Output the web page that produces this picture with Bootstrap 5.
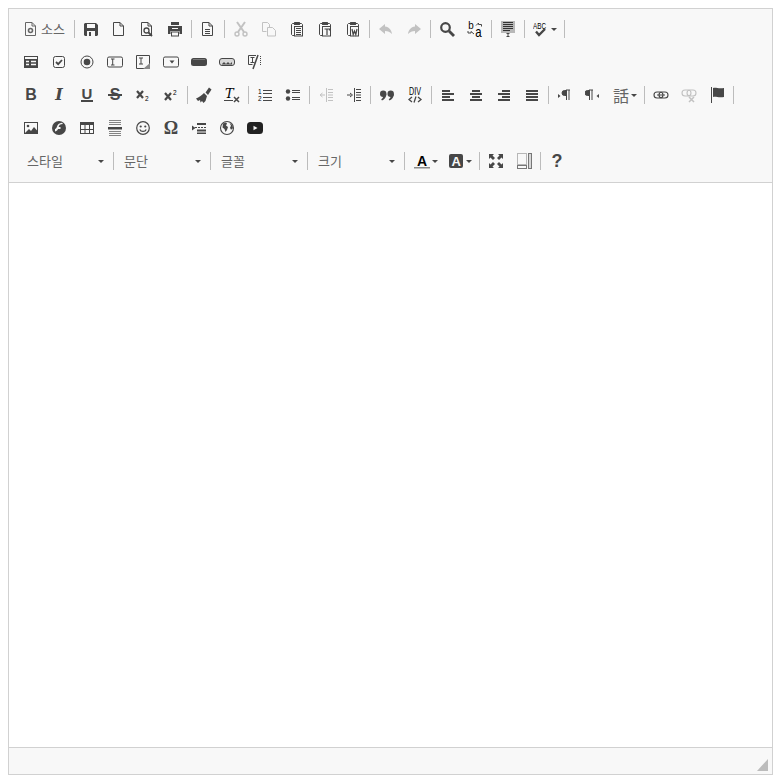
<!DOCTYPE html>
<html lang="ko">
<head>
    <meta charset="UTF-8">
    <meta name="viewport" content="width=device-width, initial-scale=1">
    <title>editor</title>
    <link rel="stylesheet" href="https://cdn.jsdelivr.net/npm/bootstrap@5.3.3/dist/css/bootstrap.min.css">
    <style>
        body { background: #fff; }
        .ed-box { height: 767px; width: 765px; border: 1px solid #d1d1d1; }
        .ed-top { background: #f8f8f8; border-bottom: 1px solid #d1d1d1; padding: 4px 0 4px 8px; }
        .ed-row { height: 32px; margin-bottom: 1px; }
        .ed-btn { width: 28px; height: 32px; padding: 8px 6px; flex: none; color: #474747; text-decoration: none; }
        .ed-btn.has-arrow { width: 35px; }
        .ed-btn.has-arrow.short { width: 34px; }
        .ed-btn.has-label { width: 55px; font: 13px/16px "Noto Sans CJK KR", sans-serif; color: #666; }
        .ed-btn.has-label span { margin-left: 2px; }
        .ed-ic { width: 16px; height: 16px; flex: none; display: block; }
        .ed-ic text { fill: currentColor; }
        .is-off .ed-ic { opacity: .3; }
        .ed-glyph { display: block; width: 16px; height: 16px; flex: none; line-height: 16px; text-align: center; }
        .g-b { font: bold 16px/16px "Liberation Sans", sans-serif; }
        .g-i { font: italic bold 16px/16px "DejaVu Serif", serif; }
        .g-u { font: bold 15px/14px "Liberation Sans", sans-serif; border-bottom: 2px solid #474747; height: 15px; width: 12px; margin: 0 2px; }
        .g-s { font: bold 16px/16px "Liberation Sans", sans-serif; background: linear-gradient(#474747, #474747) center / 14px 2px no-repeat; }
        .g-omega { font: bold 18px/16px "Liberation Serif", serif; }
        .g-help { font: bold 18px/16px "Liberation Sans", sans-serif; }
        .g-lang { font: 16px/16px "Noto Sans CJK TC", sans-serif; color: #666; }
        .ed-caret { width: 0; height: 0; margin: 0 0 0 2px; flex: none; border-left: 3px solid transparent; border-right: 3px solid transparent; border-top: 3px solid #474747; }
        .ed-sep { width: 1px; height: 18px; margin: 0 2px; flex: none; background: #bcbcbc; }
        .ed-sep.tight { margin-right: 0; }
        .ed-sep.wide { margin-right: 3px; }
        .ed-combo { width: 94px; height: 32px; padding: 0 7px 0 10px; flex: none; font: 13px/32px "Noto Sans CJK KR", sans-serif; color: #666; text-decoration: none; }
        .ed-combo .ed-caret { margin: 0 0 0 auto; }
        .ed-bottom { height: 27px; background: #f8f8f8; border-top: 1px solid #d1d1d1; }
        .ed-grip { width: 11px; height: 12px; margin: 0 4px 3px 0; }
        .t-s { font: 8px "Liberation Sans", sans-serif; }
        .t-m { font: 11px "Liberation Mono", monospace; }
        .t-xs { font: 6.5px "Liberation Sans", sans-serif; }
    </style>
</head>
<body class="m-2">

<svg width="0" height="0" class="position-absolute">
    <defs>
        <g id="doc"><path d="M2.5 1.5h6.5l3.5 3.5v9.5h-10z M9 1.5v3.5h3.5" fill="none" stroke="currentColor"/></g>
        <symbol id="i-source" viewBox="0 0 16 16"><use href="#doc"/><circle cx="7.5" cy="9.5" r="2" fill="none" stroke="currentColor" stroke-width="1.6"/></symbol>
        <symbol id="i-save" viewBox="0 0 16 16"><path d="M1 3l1-1h11l2 2v10l-1 1H2l-1-1z" fill="currentColor"/><rect x="4" y="3" width="8" height="4" fill="#f8f8f8"/><rect x="4" y="10" width="8" height="5" fill="#f8f8f8"/><rect x="6" y="11" width="2" height="4" fill="currentColor"/></symbol>
        <symbol id="i-new" viewBox="0 0 16 16"><use href="#doc"/></symbol>
        <symbol id="i-preview" viewBox="0 0 16 16"><use href="#doc"/><circle cx="7.5" cy="9.5" r="2.5" fill="#f8f8f8" stroke="currentColor" stroke-width="1.3"/><path d="M9.5 11.5l3.5 3.5" stroke="currentColor" stroke-width="1.8"/></symbol>
        <symbol id="i-print" viewBox="0 0 16 16"><rect x="4" y="1" width="8" height="3" fill="currentColor"/><path d="M1 5h14v8h-2.500v-3h-9v3H1z" fill="currentColor"/><rect x="4.500" y="11" width="7" height="4" fill="none" stroke="currentColor"/><rect x="5" y="7" width="6" height="1" fill="#f8f8f8"/></symbol>
        <symbol id="i-templates" viewBox="0 0 16 16"><use href="#doc"/><path d="M5 8.500h5M5 10.500h5M5 12.500h5" stroke="currentColor"/></symbol>
        <symbol id="i-cut" viewBox="0 0 16 16"><path d="M4 1l7 10M12 1L5 11" stroke="currentColor" stroke-width="2"/><circle cx="4" cy="13" r="2" fill="none" stroke="currentColor" stroke-width="1.400"/><circle cx="12" cy="13" r="2" fill="none" stroke="currentColor" stroke-width="1.400"/></symbol>
        <symbol id="i-copy" viewBox="0 0 16 16"><path d="M1.500 1.500h5l2 2v3M1.500 1.500v9h4" fill="none" stroke="currentColor"/><path d="M6.500 6.500h5l3 3v5.500h-8z" fill="none" stroke="currentColor"/></symbol>
        <g id="clip"><path d="M5 2.500H3.500l-1 1v10l1 1H5M11 2.500h1.500l1 1V5" fill="none" stroke="currentColor"/><rect x="5" y="1" width="6" height="3" rx=".5" fill="currentColor"/><rect x="5.500" y="5.500" width="8" height="9.500" fill="#f8f8f8" stroke="currentColor"/></g>
        <symbol id="i-paste" viewBox="0 0 16 16"><use href="#clip"/><path d="M7 7.500h5M7 9.500h5M7 11.500h5M7 13.500h5" stroke="currentColor"/></symbol>
        <symbol id="i-pastetext" viewBox="0 0 16 16"><use href="#clip"/><path d="M7.500 8h5v1.500M10 8v6" fill="none" stroke="currentColor" stroke-width="1.200"/></symbol>
        <symbol id="i-pasteword" viewBox="0 0 16 16"><use href="#clip"/><path d="M7 8l1.200 5.500L9.500 10l1.300 3.500L12 8" fill="none" stroke="currentColor" stroke-width="1.200"/></symbol>
        <symbol id="i-undo" viewBox="0 0 16 16"><path d="M7 3L1 8l6 5v-3c3 0 5 1 7 3-.500-4-3-7-7-7.500z" fill="currentColor"/></symbol>
        <symbol id="i-redo" viewBox="0 0 16 16"><path d="M9 3l6 5-6 5v-3c-3 0-5 1-7 3 .5-4 3-7 7-7.500z" fill="currentColor"/></symbol>
        <symbol id="i-find" viewBox="0 0 16 16"><circle cx="6.500" cy="6.500" r="4.300" fill="none" stroke="currentColor" stroke-width="2.200"/><path d="M10 10l5 5" stroke="currentColor" stroke-width="2.800"/></symbol>
        <symbol id="i-replace" viewBox="0 0 16 16"><text x="1" y="8" class="t-m" style="font-size:10px" textLength="6" lengthAdjust="spacingAndGlyphs">b</text><text x="8" y="15.500" class="t-m" style="font-size:15px" textLength="7" lengthAdjust="spacingAndGlyphs">a</text><path d="M9 4.500l2.500-2.500V3.500h3v2" fill="none" stroke="currentColor"/><path d="M1 10v2h3v-1.500L7 13" fill="none" stroke="currentColor"/></symbol>
        <symbol id="i-selectall" viewBox="0 0 16 16"><rect x="1" y="0" width="14" height="12" fill="#b8b8b8"/><path d="M3 1.500h10M3 3.500h10M3 5.500h10M3 7.500h10M3 9.500h7" stroke="#333"/><path d="M6.500 12.500h3M8 12.500v3M6.500 15.500h3" stroke="currentColor" fill="none"/></symbol>
        <symbol id="i-spell" viewBox="0 0 16 16"><text x="0" y="7.500" class="t-s" style="font-size:9px" textLength="13" lengthAdjust="spacingAndGlyphs">ABC</text><path d="M3 10.500l3 3.500 6-6" fill="none" stroke="currentColor" stroke-width="2.400"/></symbol>

        <symbol id="i-form" viewBox="0 0 16 16"><rect x="1" y="2" width="14" height="12" fill="currentColor"/><rect x="2" y="3" width="12" height="2" fill="#f8f8f8"/><path d="M3 7.500h3M8 7.500h5M3 10.500h3M8 10.500h5" stroke="#f8f8f8" stroke-width="1.400"/></symbol>
        <symbol id="i-check" viewBox="0 0 16 16"><rect x="2.500" y="2.500" width="11" height="11" rx="2" fill="none" stroke="currentColor"/><path d="M5 8l2.200 2.200L11 6" fill="none" stroke="currentColor" stroke-width="1.800"/></symbol>
        <symbol id="i-radio" viewBox="0 0 16 16"><circle cx="8" cy="8" r="6" fill="none" stroke="currentColor"/><circle cx="8" cy="8" r="3.300" fill="currentColor"/></symbol>
        <symbol id="i-textfield" viewBox="0 0 16 16"><rect x=".5" y="3" width="15" height="10" rx="1.500" fill="none" stroke="currentColor"/><path d="M4 5h3.500M5.700 5v6M4 11h3.500" fill="none" stroke="currentColor"/></symbol>
        <symbol id="i-textarea" viewBox="0 0 16 16"><path d="M1.500 1.500h13v13h-13z" fill="none" stroke="currentColor"/><path d="M4 4h4M6 4v6M4 10h4" fill="none" stroke="currentColor"/><path d="M15 9v6H8z" fill="#8a8a8a"/></symbol>
        <symbol id="i-select" viewBox="0 0 16 16"><rect x=".5" y="3" width="15" height="10" rx="1.500" fill="none" stroke="currentColor"/><path d="M6.500 6.500h5L9 9.500z" fill="currentColor"/></symbol>
        <symbol id="i-button" viewBox="0 0 16 16"><rect x="0" y="4" width="16" height="8" rx="2.500" fill="currentColor"/><rect x="2" y="5" width="12" height="1" fill="#777"/></symbol>
        <symbol id="i-imgbutton" viewBox="0 0 16 16"><rect x=".5" y="4.500" width="15" height="7" rx="2.500" fill="#d8d8d8" stroke="currentColor"/><path d="M3 10l2-2 2 2 2-2 2 2 2-2v2.500H3z" fill="currentColor"/></symbol>
        <symbol id="i-hidden" viewBox="0 0 16 16"><path d="M9 1.500H1.500v9h4" fill="none" stroke="currentColor"/><path d="M3.500 3.500h4M5.500 3.500v5M3.500 8.500h4" fill="none" stroke="currentColor"/><path d="M11 1l-5 14" stroke="currentColor" stroke-width="1.500"/><path d="M13.500 2v9" stroke="currentColor" stroke-dasharray="1 1" fill="none"/></symbol>

        <symbol id="i-sub" viewBox="0 0 16 16"><path d="M2 4l6 7M8 4l-6 7" stroke="currentColor" stroke-width="2.200"/><text x="10" y="14" class="t-xs">2</text></symbol>
        <symbol id="i-sup" viewBox="0 0 16 16"><path d="M2 6l6 7M8 6l-6 7" stroke="currentColor" stroke-width="2.200"/><text x="10" y="8" class="t-xs">2</text></symbol>
        <symbol id="i-brush" viewBox="0 0 16 16"><path d="M9.500 5.500L13 .5l2.500 2L12 8z" fill="currentColor"/><path d="M8 6l3 3-1.500 5-2 2L6 14l-1.500 1.500L4 13l-2 1-2-2.500C3 10.500 5.500 8.500 8 6z" fill="currentColor"/></symbol>
        <symbol id="i-clear" viewBox="0 0 16 16"><text x="1" y="11" style="font:italic 13px 'DejaVu Serif',serif">T</text><path d="M0 13.500h9" stroke="currentColor"/><path d="M10 10l5 5M15 10l-5 5" stroke="currentColor" stroke-width="1.500"/></symbol>
        <symbol id="i-numlist" viewBox="0 0 16 16"><text x="1" y="7" class="t-xs">1</text><text x="1" y="14" class="t-xs">2</text><path d="M6 3.500h9M6 6.500h9M6 10.500h9M6 13.500h9" stroke="currentColor"/></symbol>
        <symbol id="i-bullet" viewBox="0 0 16 16"><circle cx="3" cy="4.500" r="2.200" fill="currentColor"/><circle cx="3" cy="11.500" r="2.200" fill="currentColor"/><path d="M7 3.500h8M7 5.500h8M7 10.500h8M7 12.500h8" stroke="currentColor"/></symbol>
        <g id="indentlines"><path d="M8.500 1v14" stroke="currentColor"/><path d="M10 2.500h5M10 5.500h5M10 8h5M10 10.500h5M10 13.500h5" stroke="currentColor"/></g>
        <symbol id="i-outdent" viewBox="0 0 16 16"><use href="#indentlines"/><path d="M7 8H3M4.500 6L2 8l2.500 2" fill="none" stroke="currentColor"/></symbol>
        <symbol id="i-indent" viewBox="0 0 16 16"><use href="#indentlines"/><path d="M1 8h4M4 6l2.500 2L4 10" fill="none" stroke="currentColor"/></symbol>
        <symbol id="i-quote" viewBox="0 0 16 16"><circle cx="4.200" cy="6.700" r="3.200" fill="currentColor"/><path d="M7.400 6.700c0 3.300-1.800 5.800-4.400 6.800l-.8-1.300c1.500-1 2.200-2.200 2.200-4z" fill="currentColor"/><circle cx="11.700" cy="6.700" r="3.200" fill="currentColor"/><path d="M14.900 6.700c0 3.300-1.800 5.800-4.400 6.800l-.8-1.300c1.500-1 2.200-2.200 2.200-4z" fill="currentColor"/></symbol>
        <symbol id="i-div" viewBox="0 0 16 16"><text x="2" y="8" class="t-s" style="font-size:10px" textLength="12" lengthAdjust="spacingAndGlyphs">DIV</text><path d="M5 10l-3 2.500L5 15M11 10l3 2.500-3 2.500M9 9.500l-2 6" fill="none" stroke="currentColor" stroke-width="1.300"/></symbol>
        <symbol id="i-left" viewBox="0 0 16 16"><path d="M2 4h8M2 7h12M2 10h8M2 13h12" stroke="currentColor" stroke-width="1.800"/></symbol>
        <symbol id="i-center" viewBox="0 0 16 16"><path d="M4 4h8M2 7h12M4 10h8M2 13h12" stroke="currentColor" stroke-width="1.800"/></symbol>
        <symbol id="i-right" viewBox="0 0 16 16"><path d="M6 4h8M2 7h12M6 10h8M2 13h12" stroke="currentColor" stroke-width="1.800"/></symbol>
        <symbol id="i-justify" viewBox="0 0 16 16"><path d="M2 4h12M2 7h12M2 10h12M2 13h12" stroke="currentColor" stroke-width="1.800"/></symbol>
        <g id="pilcrow"><path d="M9 3.500H7.500a2.500 2.500 0 0 0 0 5H9z" fill="currentColor" stroke="currentColor"/><path d="M9 3h4M9.500 3v10M12 3v10" fill="none" stroke="currentColor"/></g>
        <symbol id="i-ltr" viewBox="0 0 16 16"><use href="#pilcrow"/><path d="M1 7L3.500 9 1 11z" fill="currentColor"/></symbol>
        <symbol id="i-rtl" viewBox="0 0 16 16"><use href="#pilcrow" x="-5"/><path d="M14 7L11.500 9l2.500 2z" fill="currentColor"/></symbol>
        <symbol id="i-link" viewBox="0 0 16 16"><rect x="1" y="5" width="9" height="6" rx="3" fill="none" stroke="currentColor" stroke-width="1.100"/><rect x="6" y="5" width="9" height="6" rx="3" fill="none" stroke="currentColor" stroke-width="1.100"/><path d="M4 8h8" stroke="currentColor"/></symbol>
        <symbol id="i-unlink" viewBox="0 0 16 16"><rect x="1" y="3" width="9" height="6" rx="3" fill="none" stroke="currentColor" stroke-width="1.100"/><rect x="6" y="3" width="9" height="6" rx="3" fill="none" stroke="currentColor" stroke-width="1.100"/><path d="M8 10l5 5M13 10l-5 5" stroke="currentColor" stroke-width="1.500"/></symbol>
        <symbol id="i-anchor" viewBox="0 0 16 16"><path d="M2.500 0v16" stroke="currentColor"/><path d="M4 1c3-1 5 1 11 0v9c-6 1-8-1-11 0z" fill="currentColor"/></symbol>

        <symbol id="i-image" viewBox="0 0 16 16"><rect x="1.500" y="2.500" width="13" height="11" fill="#f8f8f8" stroke="currentColor"/><circle cx="5" cy="6" r="1.300" fill="currentColor"/><path d="M2 13l4-4 2 2 3-4 3.500 4v2z" fill="currentColor"/></symbol>
        <symbol id="i-flash" viewBox="0 0 16 16"><circle cx="8" cy="8" r="7" fill="currentColor"/><path d="M12 4c-3 0-4 1-4.500 3.500S6 11 4 11.500V9c1 0 1.500-1 2-2.500S8 3 11 2.800zM6.500 7h3v2h-3z" fill="#f8f8f8"/></symbol>
        <symbol id="i-table" viewBox="0 0 16 16"><rect x="1.500" y="2.500" width="13" height="11" fill="none" stroke="currentColor"/><rect x="1" y="2" width="14" height="3" fill="currentColor"/><path d="M6 5v8M10.500 5v8M2 9.500h12" stroke="currentColor"/></symbol>
        <symbol id="i-hr" viewBox="0 0 16 16"><path d="M2 .5h12M2 2.500h12M2 4.500h12M2 11.500h12M2 13.500h12M2 15.500h12" stroke="currentColor" opacity=".65"/><rect x="1" y="7" width="14" height="2.500" fill="currentColor"/></symbol>
        <symbol id="i-smiley" viewBox="0 0 16 16"><circle cx="8" cy="8" r="6.300" fill="none" stroke="currentColor" stroke-width="1.200"/><circle cx="5.700" cy="6.500" r="1.100" fill="currentColor"/><circle cx="10.300" cy="6.500" r="1.100" fill="currentColor"/><path d="M4.800 9.500c1 2.500 5.400 2.500 6.400 0" fill="none" stroke="currentColor" stroke-width="1.200"/></symbol>
        <symbol id="i-pagebreak" viewBox="0 0 16 16"><path d="M1 5.500L4.500 8 1 10.500z" fill="currentColor"/><rect x="6" y="3" width="9" height="2" fill="currentColor"/><path d="M4 7.500h11" stroke="currentColor" stroke-dasharray="2 1"/><rect x="6" y="9.500" width="9" height="2" fill="currentColor"/><rect x="6" y="12.500" width="9" height="1.500" fill="currentColor"/></symbol>
        <symbol id="i-iframe" viewBox="0 0 16 16"><circle cx="8" cy="8" r="6.500" fill="none" stroke="currentColor" stroke-width="1.100"/><path d="M4 3.500l3-1 1 1-1 2 2 1.500-1 3-1.500 2-1-3-2-1.500zM10.500 2.800l3 2.500.5 3-2 1.500-1-2 1-2z" fill="currentColor"/></symbol>
        <symbol id="i-youtube" viewBox="0 0 16 16"><rect x="0" y="2" width="16" height="12" rx="3.500" fill="#222"/><path d="M6.500 5.800L10.500 8l-4 2.200z" fill="#f8f8f8"/></symbol>

        <symbol id="i-fcolor" viewBox="0 0 16 16"><text x="3" y="12.500" style="font:bold 14px 'Liberation Sans',sans-serif">A</text><rect x="0" y="14" width="16" height="1.500" fill="#8a8a8a"/></symbol>
        <symbol id="i-bgcolor" viewBox="0 0 16 16"><rect x="1" y="1" width="14" height="14" rx="2" fill="currentColor"/><text x="3.500" y="12.500" style="font:bold 13px 'Liberation Sans',sans-serif;fill:#f8f8f8">A</text></symbol>
        <symbol id="i-max" viewBox="0 0 16 16"><path d="M1 1h5L4.500 2.500 7 5 5 7 2.500 4.500 1 6zM15 1v5l-1.500-1.500L11 7 9 5l2.500-2.500L10 1zM1 15v-5l1.500 1.500L5 9l2 2-2.500 2.500L6 15zM15 15h-5l1.500-1.500L9 11l2-2 2.500 2.500L15 10z" fill="currentColor"/></symbol>
        <symbol id="i-blocks" viewBox="0 0 16 16"><rect x="1.500" y=".5" width="9" height="11" fill="none" stroke="#777" stroke-dasharray="1 1"/><rect x="1.500" y="12.500" width="9" height="3" fill="none" stroke="#777"/><rect x="12.500" y=".5" width="3" height="15" fill="#d8d8d8" stroke="#777"/></symbol>
    </defs>
</svg>

<div class="ed-box d-flex flex-column">
    <div class="ed-top">
        <div class="ed-row d-flex align-items-center">
            <a class="ed-btn has-label d-flex" href="#"><svg class="ed-ic"><use href="#i-source"/></svg><span>소스</span></a>
            <i class="ed-sep"></i>
            <a class="ed-btn" href="#"><svg class="ed-ic"><use href="#i-save"/></svg></a>
            <a class="ed-btn" href="#"><svg class="ed-ic"><use href="#i-new"/></svg></a>
            <a class="ed-btn" href="#"><svg class="ed-ic"><use href="#i-preview"/></svg></a>
            <a class="ed-btn" href="#"><svg class="ed-ic"><use href="#i-print"/></svg></a>
            <i class="ed-sep"></i>
            <a class="ed-btn" href="#"><svg class="ed-ic"><use href="#i-templates"/></svg></a>
            <i class="ed-sep"></i>
            <a class="ed-btn is-off" href="#"><svg class="ed-ic"><use href="#i-cut"/></svg></a>
            <a class="ed-btn is-off" href="#"><svg class="ed-ic"><use href="#i-copy"/></svg></a>
            <a class="ed-btn" href="#"><svg class="ed-ic"><use href="#i-paste"/></svg></a>
            <a class="ed-btn" href="#"><svg class="ed-ic"><use href="#i-pastetext"/></svg></a>
            <a class="ed-btn" href="#"><svg class="ed-ic"><use href="#i-pasteword"/></svg></a>
            <i class="ed-sep"></i>
            <a class="ed-btn is-off" href="#"><svg class="ed-ic"><use href="#i-undo"/></svg></a>
            <a class="ed-btn is-off" href="#"><svg class="ed-ic"><use href="#i-redo"/></svg></a>
            <i class="ed-sep"></i>
            <a class="ed-btn" href="#"><svg class="ed-ic"><use href="#i-find"/></svg></a>
            <a class="ed-btn" href="#"><svg class="ed-ic"><use href="#i-replace"/></svg></a>
            <i class="ed-sep"></i>
            <a class="ed-btn" href="#"><svg class="ed-ic"><use href="#i-selectall"/></svg></a>
            <i class="ed-sep"></i>
            <a class="ed-btn has-arrow d-flex align-items-center" href="#"><svg class="ed-ic"><use href="#i-spell"/></svg><i class="ed-caret"></i></a>
            <i class="ed-sep"></i>
        </div>
        <div class="ed-row d-flex align-items-center">
            <a class="ed-btn" href="#"><svg class="ed-ic"><use href="#i-form"/></svg></a>
            <a class="ed-btn" href="#"><svg class="ed-ic"><use href="#i-check"/></svg></a>
            <a class="ed-btn" href="#"><svg class="ed-ic"><use href="#i-radio"/></svg></a>
            <a class="ed-btn" href="#"><svg class="ed-ic"><use href="#i-textfield"/></svg></a>
            <a class="ed-btn" href="#"><svg class="ed-ic"><use href="#i-textarea"/></svg></a>
            <a class="ed-btn" href="#"><svg class="ed-ic"><use href="#i-select"/></svg></a>
            <a class="ed-btn" href="#"><svg class="ed-ic"><use href="#i-button"/></svg></a>
            <a class="ed-btn" href="#"><svg class="ed-ic"><use href="#i-imgbutton"/></svg></a>
            <a class="ed-btn" href="#"><svg class="ed-ic"><use href="#i-hidden"/></svg></a>
        </div>
        <div class="ed-row d-flex align-items-center">
            <a class="ed-btn" href="#"><span class="ed-glyph g-b">B</span></a>
            <a class="ed-btn" href="#"><span class="ed-glyph g-i">I</span></a>
            <a class="ed-btn" href="#"><span class="ed-glyph g-u">U</span></a>
            <a class="ed-btn" href="#"><span class="ed-glyph g-s">S</span></a>
            <a class="ed-btn" href="#"><svg class="ed-ic"><use href="#i-sub"/></svg></a>
            <a class="ed-btn" href="#"><svg class="ed-ic"><use href="#i-sup"/></svg></a>
            <i class="ed-sep"></i>
            <a class="ed-btn" href="#"><svg class="ed-ic"><use href="#i-brush"/></svg></a>
            <a class="ed-btn" href="#"><svg class="ed-ic"><use href="#i-clear"/></svg></a>
            <i class="ed-sep"></i>
            <a class="ed-btn" href="#"><svg class="ed-ic"><use href="#i-numlist"/></svg></a>
            <a class="ed-btn" href="#"><svg class="ed-ic"><use href="#i-bullet"/></svg></a>
            <i class="ed-sep"></i>
            <a class="ed-btn is-off" href="#"><svg class="ed-ic"><use href="#i-outdent"/></svg></a>
            <a class="ed-btn" href="#"><svg class="ed-ic"><use href="#i-indent"/></svg></a>
            <i class="ed-sep"></i>
            <a class="ed-btn" href="#"><svg class="ed-ic"><use href="#i-quote"/></svg></a>
            <a class="ed-btn" href="#"><svg class="ed-ic"><use href="#i-div"/></svg></a>
            <i class="ed-sep"></i>
            <a class="ed-btn" href="#"><svg class="ed-ic"><use href="#i-left"/></svg></a>
            <a class="ed-btn" href="#"><svg class="ed-ic"><use href="#i-center"/></svg></a>
            <a class="ed-btn" href="#"><svg class="ed-ic"><use href="#i-right"/></svg></a>
            <a class="ed-btn" href="#"><svg class="ed-ic"><use href="#i-justify"/></svg></a>
            <i class="ed-sep"></i>
            <a class="ed-btn" href="#"><svg class="ed-ic"><use href="#i-ltr"/></svg></a>
            <a class="ed-btn" href="#"><svg class="ed-ic"><use href="#i-rtl"/></svg></a>
            <a class="ed-btn has-arrow d-flex align-items-center" href="#"><span class="ed-glyph g-lang">話</span><i class="ed-caret"></i></a>
            <i class="ed-sep"></i>
            <a class="ed-btn" href="#"><svg class="ed-ic"><use href="#i-link"/></svg></a>
            <a class="ed-btn is-off" href="#"><svg class="ed-ic"><use href="#i-unlink"/></svg></a>
            <a class="ed-btn" href="#"><svg class="ed-ic"><use href="#i-anchor"/></svg></a>
            <i class="ed-sep"></i>
        </div>
        <div class="ed-row d-flex align-items-center">
            <a class="ed-btn" href="#"><svg class="ed-ic"><use href="#i-image"/></svg></a>
            <a class="ed-btn" href="#"><svg class="ed-ic"><use href="#i-flash"/></svg></a>
            <a class="ed-btn" href="#"><svg class="ed-ic"><use href="#i-table"/></svg></a>
            <a class="ed-btn" href="#"><svg class="ed-ic"><use href="#i-hr"/></svg></a>
            <a class="ed-btn" href="#"><svg class="ed-ic"><use href="#i-smiley"/></svg></a>
            <a class="ed-btn" href="#"><span class="ed-glyph g-omega">Ω</span></a>
            <a class="ed-btn" href="#"><svg class="ed-ic"><use href="#i-pagebreak"/></svg></a>
            <a class="ed-btn" href="#"><svg class="ed-ic"><use href="#i-iframe"/></svg></a>
            <a class="ed-btn" href="#"><svg class="ed-ic"><use href="#i-youtube"/></svg></a>
        </div>
        <div class="ed-row d-flex align-items-center">
            <a class="ed-combo d-flex align-items-center" href="#"><span>스타일</span><i class="ed-caret"></i></a>
            <i class="ed-sep tight"></i>
            <a class="ed-combo d-flex align-items-center" href="#"><span>문단</span><i class="ed-caret"></i></a>
            <i class="ed-sep tight"></i>
            <a class="ed-combo d-flex align-items-center" href="#"><span>글꼴</span><i class="ed-caret"></i></a>
            <i class="ed-sep tight"></i>
            <a class="ed-combo d-flex align-items-center" href="#"><span>크기</span><i class="ed-caret"></i></a>
            <i class="ed-sep wide"></i>
            <a class="ed-btn has-arrow short d-flex align-items-center" href="#"><svg class="ed-ic"><use href="#i-fcolor"/></svg><i class="ed-caret"></i></a>
            <a class="ed-btn has-arrow d-flex align-items-center" href="#"><svg class="ed-ic"><use href="#i-bgcolor"/></svg><i class="ed-caret"></i></a>
            <i class="ed-sep"></i>
            <a class="ed-btn" href="#"><svg class="ed-ic"><use href="#i-max"/></svg></a>
            <a class="ed-btn" href="#"><svg class="ed-ic"><use href="#i-blocks"/></svg></a>
            <i class="ed-sep"></i>
            <a class="ed-btn" href="#"><span class="ed-glyph g-help">?</span></a>
        </div>
    </div>
    <div class="flex-grow-1 bg-white"></div>
    <div class="ed-bottom d-flex justify-content-end align-items-end">
        <svg class="ed-grip" viewBox="0 0 11 12"><path d="M11 0v12H0z" fill="#bcbcbc"/></svg>
    </div>
</div>

<script src="https://cdn.jsdelivr.net/npm/bootstrap@5.3.3/dist/js/bootstrap.bundle.min.js"></script>
</body>
</html>
